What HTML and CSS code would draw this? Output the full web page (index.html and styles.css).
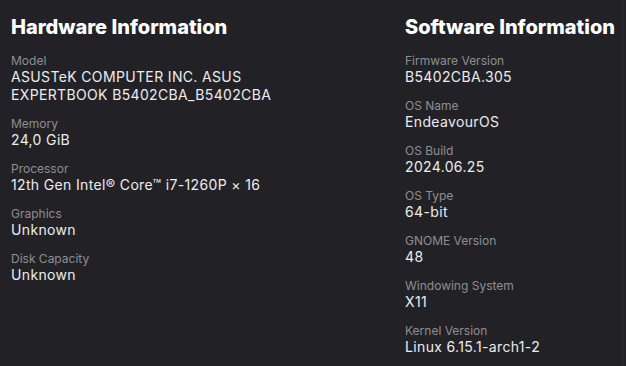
FILE: index.html
```html
<!DOCTYPE html>
<html lang="en">
<head>
	<meta charset="UTF-8">
	<title>System Details</title>
	<link rel="stylesheet" href="styles.css">
</head>
<body>
	<div class="window">
		<div class="columns">
			<!-- 硬件 -->
			<div class="col">
				<h2 class="title">Hardware Information</h2>
				<div class="row">
					<div class="label">Model</div>
					<div class="value">ASUSTeK COMPUTER INC. ASUS<br>EXPERTBOOK B5402CBA_B5402CBA</div>
				</div>
				<div class="row">
					<div class="label">Memory</div>
					<div class="value">24,0 GiB</div>
				</div>
				<div class="row">
					<div class="label">Processor</div>
					<div class="value">12th Gen Intel® Core™ i7-1260P × 16</div>
				</div>
				<div class="row">
					<div class="label">Graphics</div>
					<div class="value">Unknown</div>
				</div>
				<div class="row">
					<div class="label">Disk Capacity</div>
					<div class="value">Unknown</div>
				</div>
			</div>
			<!-- 软件 -->
			<div class="col">
				<h2 class="title">Software Information</h2>
				<div class="row">
					<div class="label">Firmware Version</div>
					<div class="value">B5402CBA.305</div>
				</div>
				<div class="row">
					<div class="label">OS Name</div>
					<div class="value">EndeavourOS</div>
				</div>
				<div class="row">
					<div class="label">OS Build</div>
					<div class="value">2024.06.25</div>
				</div>
				<div class="row">
					<div class="label">OS Type</div>
					<div class="value">64-bit</div>
				</div>
				<div class="row">
					<div class="label">GNOME Version</div>
					<div class="value">48</div>
				</div>
				<div class="row">
					<div class="label">Windowing System</div>
					<div class="value">X11</div>
				</div>
				<div class="row">
					<div class="label">Kernel Version</div>
					<div class="value">Linux 6.15.1-arch1-2</div>
				</div>
			</div>
		</div>
		<div class="edge"></div>
	</div>
</body>
</html>
```

FILE: styles.css
```css
*{margin: 0;padding: 0;}
html,body{
	width: 626px;
	height: 366px;
	overflow: hidden;
	background: #222226;
}
body{
	font-family: Inter, "Noto Sans", sans-serif;
	color: #e8e8ea;
}
.window{
	display: flex;
	height: 366px;
}
.columns{
	flex: 1;
	display: grid;
	grid-template-columns: 394px 1fr;
	padding: 15px 0 0 11px;
}
.col{
	display: flex;
	flex-direction: column;
	gap: 12px;
}
.title{
	font-size: 20px;
	line-height: 24px;
	font-weight: 800;
	color: #ffffff;
	margin-bottom: 2px;
}
.label{
	font-size: 12px;
	line-height: 15px;
	color: #8e8e92;
}
.value{
	font-size: 14px;
	line-height: 18px;
	letter-spacing: 0.35px;
	color: #ececee;
}

/*右边的边线*/
.edge{
	width: 3px;
	border-left: 1px solid #2e2e33;
	background: #242428;
}
```
